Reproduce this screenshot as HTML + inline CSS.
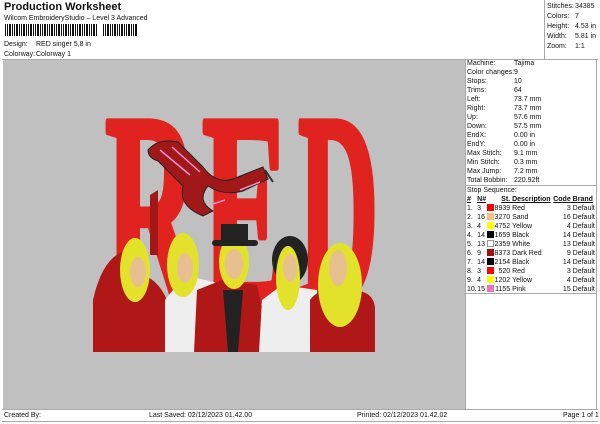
<!DOCTYPE html>
<html><head><style>
body{margin:0;width:600px;height:424px;background:#fff;font-family:"Liberation Sans",sans-serif;color:#111;position:relative;overflow:hidden}
.a{position:absolute;white-space:nowrap}
.s{font-size:7px;line-height:9px}
table{border-collapse:collapse;font-size:7px}
td{padding:0;height:9px;line-height:9px;white-space:nowrap}
.sw{display:inline-block;width:7px;height:7px;vertical-align:-1px;box-sizing:border-box}
</style></head><body>
<div class="a" style="left:4px;top:1px;font-size:11px;font-weight:bold">Production Worksheet</div>
<div class="a s" style="left:4px;top:14px">Wilcom EmbroideryStudio – Level 3 Advanced</div>
<div class="a" style="left:5px;top:24px;width:92px;height:12px;background:repeating-linear-gradient(90deg,#111 0 1px,#fff 1px 2px,#111 2px 3px,#fff 3px 4px,#111 4px 6px,#fff 6px 7px)"></div>
<div class="a" style="left:103px;top:24px;width:34px;height:12px;background:repeating-linear-gradient(90deg,#111 0 1px,#fff 1px 2px,#111 2px 3px,#fff 3px 4px,#111 4px 6px,#fff 6px 7px)"></div>
<div class="a s" style="left:4px;top:40px">Design:</div><div class="a s" style="left:36px;top:40px">RED singer 5,8 in</div>
<div class="a s" style="left:4px;top:50px">Colorway:</div><div class="a s" style="left:36px;top:50px">Colorway 1</div>
<div class="a" style="left:2px;top:59px;width:596px;height:1px;background:#aaa"></div>
<div class="a" style="left:544px;top:0;width:1px;height:59px;background:#aaa"></div>
<div class="a s" style="left:547px;top:2px;line-height:10px">Stitches:<br>Colors:<br>Height:<br>Width:<br>Zoom:</div>
<div class="a s" style="left:575px;top:2px;line-height:10px">34385<br>7<br>4.53 in<br>5.81 in<br>1:1</div>
<div class="a" style="left:3px;top:60px;width:462px;height:349px;background:#c0c0c0"></div>
<svg class="a" style="left:3px;top:60px" width="462" height="349" viewBox="3 60 462 349">
<g fill="#e0231f" stroke="#e0231f" stroke-width="7" stroke-linejoin="round" font-family="Liberation Serif" font-weight="bold" font-size="272">
<text transform="translate(105,300) scale(0.48,1)">R</text>
<text transform="translate(202,300) scale(0.48,1)">E</text>
<text transform="translate(298,300) scale(0.41,1)">D</text>
</g>
<path d="M148 150q10-12 30-8l25 25q15 20 35 10l25-10 5 12-25 12q-20 5-35-5q-12 15 5 25l-10 5q-25-10-20-30l-25-25q-10-3-10-11z" fill="#a01818" stroke="#222" stroke-width="1"/>
<path d="M160 150l30 25M172 147l28 25M240 190l20-8M210 205l15-5" stroke="#f090d0" stroke-width="1.5"/>
<path d="M265 170l8 12" stroke="#333" stroke-width="2"/>
<g>
<path d="M150 255v-60l8-5v65z" fill="#a01818"/>
<path d="M93 300q10-45 35-50l15 25q30 10 35 77h-85z" fill="#b01818"/>
<path d="M120 290q30 10 40 40l-8 22h-40z" fill="#b01818"/>
<ellipse cx="135" cy="270" rx="15" ry="32" fill="#e2e22a"/>
<ellipse cx="138" cy="272" rx="8" ry="15" fill="#e8c090"/>
<path d="M165 300l20-25 40 10v67h-60z" fill="#eee"/>
<ellipse cx="183" cy="265" rx="16" ry="32" fill="#e2e22a"/>
<ellipse cx="185" cy="268" rx="8" ry="15" fill="#e8c090"/>
<path d="M197 290l25-10 35 5 15 67h-78z" fill="#b01818"/>
<path d="M223 290h20l-5 62h-10z" fill="#222"/>
<ellipse cx="234" cy="262" rx="15" ry="27" fill="#e2e22a"/>
<ellipse cx="234" cy="264" rx="9" ry="15" fill="#e8c090"/>
<rect x="221" y="224" width="27" height="18" fill="#222"/><rect x="212" y="240" width="46" height="6" rx="3" fill="#222"/>
<path d="M262 300l20-15 35 5v62h-58z" fill="#eee"/>
<ellipse cx="290" cy="260" rx="18" ry="24" fill="#222"/>
<ellipse cx="288" cy="278" rx="12" ry="32" fill="#e2e22a"/>
<ellipse cx="290" cy="268" rx="7" ry="14" fill="#e8c090"/>
<path d="M310 300q10-15 40-10q25 0 25 20v42h-65z" fill="#b01818"/>
<ellipse cx="340" cy="285" rx="22" ry="42" fill="#e2e22a"/>
<ellipse cx="338" cy="268" rx="9" ry="18" fill="#e8c090"/>
</g>
</svg>
<div class="a" style="left:465px;top:60px;width:132px;height:349px;border-left:1px solid #aaa;border-right:1px solid #aaa;box-sizing:border-box"></div>
<div class="a s" style="left:467px;top:59px">Machine:<br>Color changes:<br>Stops:<br>Trims:<br>Left:<br>Right:<br>Up:<br>Down:<br>EndX:<br>EndY:<br>Max Stitch:<br>Min Stitch:<br>Max Jump:<br>Total Bobbin:</div>
<div class="a s" style="left:514px;top:59px">Tajima<br>9<br>10<br>64<br>73.7 mm<br>73.7 mm<br>57.6 mm<br>57.5 mm<br>0.00 in<br>0.00 in<br>9.1 mm<br>0.3 mm<br>7.2 mm<br>220.92ft</div>
<div class="a" style="left:466px;top:185px;width:130px;height:1px;background:#aaa"></div>
<div class="a s" style="left:467px;top:186px">Stop Sequence:</div>
<table class="a" style="left:467px;top:195px;width:129px">
<tr style="font-weight:bold;text-decoration:underline"><td>#</td><td>N#</td><td></td><td style="text-align:right">St.</td><td>&nbsp;Description</td><td style="text-align:right">Code</td><td>&nbsp;Brand</td></tr>
<tr><td>1.</td><td>3</td><td><span class="sw" style="background:#f00"></span></td><td style="text-align:right">8939</td><td>&nbsp;Red</td><td style="text-align:right">3</td><td>&nbsp;Default</td></tr>
<tr><td>2.</td><td>16</td><td><span class="sw" style="background:#f5c080"></span></td><td style="text-align:right">3270</td><td>&nbsp;Sand</td><td style="text-align:right">16</td><td>&nbsp;Default</td></tr>
<tr><td>3.</td><td>4</td><td><span class="sw" style="background:#ff0"></span></td><td style="text-align:right">4752</td><td>&nbsp;Yellow</td><td style="text-align:right">4</td><td>&nbsp;Default</td></tr>
<tr><td>4.</td><td>14</td><td><span class="sw" style="background:#000"></span></td><td style="text-align:right">1659</td><td>&nbsp;Black</td><td style="text-align:right">14</td><td>&nbsp;Default</td></tr>
<tr><td>5.</td><td>13</td><td><span class="sw" style="border:1px solid #999"></span></td><td style="text-align:right">2359</td><td>&nbsp;White</td><td style="text-align:right">13</td><td>&nbsp;Default</td></tr>
<tr><td>6.</td><td>9</td><td><span class="sw" style="background:#a01010"></span></td><td style="text-align:right">8373</td><td>&nbsp;Dark Red</td><td style="text-align:right">9</td><td>&nbsp;Default</td></tr>
<tr><td>7.</td><td>14</td><td><span class="sw" style="background:#000"></span></td><td style="text-align:right">2154</td><td>&nbsp;Black</td><td style="text-align:right">14</td><td>&nbsp;Default</td></tr>
<tr><td>8.</td><td>3</td><td><span class="sw" style="background:#f00"></span></td><td style="text-align:right">520</td><td>&nbsp;Red</td><td style="text-align:right">3</td><td>&nbsp;Default</td></tr>
<tr><td>9.</td><td>4</td><td><span class="sw" style="background:#ff0"></span></td><td style="text-align:right">1202</td><td>&nbsp;Yellow</td><td style="text-align:right">4</td><td>&nbsp;Default</td></tr>
<tr><td>10.</td><td>15</td><td><span class="sw" style="background:#f070c0"></span></td><td style="text-align:right">1155</td><td>&nbsp;Pink</td><td style="text-align:right">15</td><td>&nbsp;Default</td></tr>
</table>
<div class="a" style="left:466px;top:293px;width:130px;height:1px;background:#aaa"></div>
<div class="a" style="left:2px;top:409px;width:596px;height:1px;background:#aaa"></div>
<div class="a" style="left:2px;top:421px;width:596px;height:1px;background:#aaa"></div>
<div class="a s" style="left:4px;top:411px">Created By:</div>
<div class="a s" style="left:149px;top:411px">Last Saved: 02/12/2023 01.42.00</div>
<div class="a s" style="left:357px;top:411px">Printed: 02/12/2023 01.42.02</div>
<div class="a s" style="left:563px;top:411px">Page 1 of 1</div>
</body></html>
